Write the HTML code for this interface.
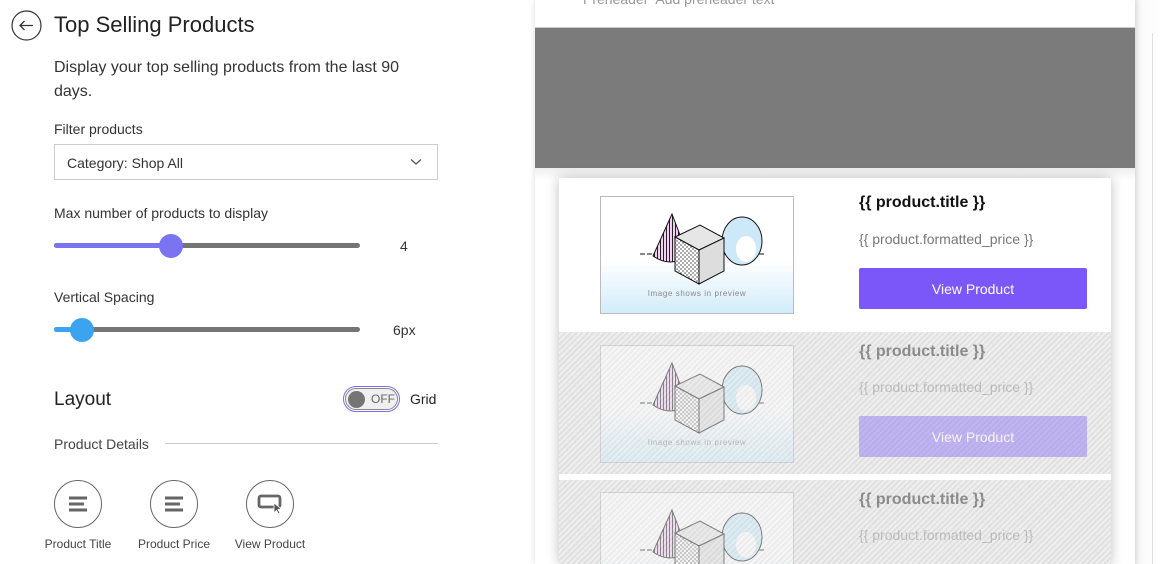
<!DOCTYPE html>
<html style="width:1162px;height:564px;overflow:hidden"><head><meta charset="utf-8"><style>
*{box-sizing:border-box;margin:0;padding:0}
body{width:1162px;height:564px;overflow:hidden;background:#fff;font-family:"Liberation Sans",sans-serif;position:relative;color:#222}
.a{position:absolute}
.lbl{font-size:14px;color:#333}
.track{position:absolute;height:5px;border-radius:3px;background:#757575}
.circ{position:absolute;width:48px;height:48px;border:1.3px solid #666;border-radius:50%;display:flex;align-items:center;justify-content:center}
.cap{position:absolute;font-size:12px;color:#444;text-align:center;width:96px}
.row{position:absolute;left:0;width:552px;overflow:hidden}
.hatch{background:repeating-linear-gradient(135deg,#e6e6e6 0 2px,#eeeeee 2px 4px)}
.img{position:absolute;left:41px;width:194px;height:118px}
.t{position:absolute;left:300px;font-size:16px;font-weight:bold;color:#111}
.p{position:absolute;left:300px;font-size:14px;color:#777}
.btn{position:absolute;left:300px;width:228px;height:41px;background:#7b57fa;color:#fff;font-size:14px;display:flex;align-items:center;justify-content:center;border-radius:2px}
.ov{position:absolute;inset:0;background:repeating-linear-gradient(135deg,rgba(210,210,210,.3) 0 2px,rgba(240,240,240,.3) 2px 4px)}
</style></head><body>
<svg width="0" height="0" style="position:absolute"><defs>
<linearGradient id="g" x1="0" y1="0" x2="0" y2="1"><stop offset="0.55" stop-color="#fff"/><stop offset="1" stop-color="#d2ecfa"/></linearGradient>
<pattern id="st" width="3" height="3" patternUnits="userSpaceOnUse"><rect width="3" height="3" fill="#f3d0f3"/><rect width="1" height="3" fill="#222"/></pattern>
<pattern id="sp" width="4" height="4" patternUnits="userSpaceOnUse"><rect width="4" height="4" fill="#fff"/><path d="M0 1h2M2 3h2" stroke="#222" stroke-width=".8"/></pattern>
<symbol id="pic" viewBox="0 0 194 118">
<rect x=".5" y=".5" width="193" height="117" fill="url(#g)" stroke="#bbb"/>
<path d="M40 58h125" stroke="#111" stroke-dasharray="5 2"/>
<ellipse cx="142" cy="45" rx="20" ry="24" fill="#cde9f9" stroke="#111"/>
<ellipse cx="146" cy="53" rx="10" ry="13" fill="#fff"/>
<path d="M72 18L53 60Q70 72 88 60Z" fill="url(#st)" stroke="#111"/>
<path d="M75 41L100 29L124 42L99 54Z" fill="#e6e6e6" stroke="#111"/>
<path d="M75 41L99 54L99 88L75 75Z" fill="url(#sp)" stroke="#111"/>
<path d="M99 54L124 42L124 75L99 88Z" fill="#ddd" stroke="#111"/>
<text x="97" y="100" font-size="8" fill="#888" text-anchor="middle" font-family="Liberation Sans" letter-spacing=".6">Image shows in preview</text>
</symbol></defs></svg>

<svg class="a" style="left:11px;top:10px" width="32" height="32"><circle cx="15.5" cy="15.5" r="14.5" fill="none" stroke="#333" stroke-width="1.2"/><path d="M9 15.5h13M13.5 11l-4.5 4.5 4.5 4.5" fill="none" stroke="#333" stroke-width="1.3"/></svg>
<div class="a" style="left:54px;top:12px;font-size:22px;color:#222">Top Selling Products</div>
<div class="a" style="left:54px;top:56px;font-size:16px;line-height:24px;color:#333;width:370px">Display your top selling products from the last 90 days.</div>
<div class="a lbl" style="left:54px;top:121px">Filter products</div>
<div class="a" style="left:54px;top:144px;width:384px;height:36px;border:1px solid #ccc"><span class="a" style="left:12px;top:10px;font-size:14px;color:#333">Category: Shop All</span><svg class="a" style="left:355px;top:13px" width="12" height="8"><path d="M1 1.5l5 4.5 5-4.5" fill="none" stroke="#555" stroke-width="1.3"/></svg></div>
<div class="a lbl" style="left:54px;top:205px">Max number of products to display</div>
<div class="track" style="left:54px;top:243px;width:306px"></div>
<div class="track" style="left:54px;top:243px;width:117px;background:#7a74f0"></div>
<div class="a" style="left:159px;top:234px;width:24px;height:24px;border-radius:50%;background:#7a74f0"></div>
<div class="a" style="left:400px;top:238px;font-size:14px;color:#333">4</div>
<div class="a lbl" style="left:54px;top:289px">Vertical Spacing</div>
<div class="track" style="left:54px;top:327px;width:306px"></div>
<div class="track" style="left:54px;top:327px;width:28px;background:#3ba3f0"></div>
<div class="a" style="left:70px;top:318px;width:24px;height:24px;border-radius:50%;background:#3ba3f0"></div>
<div class="a" style="left:393px;top:322px;font-size:14px;color:#333">6px</div>
<div class="a" style="left:54px;top:389px;font-size:19px;color:#222">Layout</div>
<div class="a" style="left:343px;top:386px;width:57px;height:26px;border-radius:13px;border:1.5px solid #7b6cf0;padding:1px"><div style="width:100%;height:100%;border-radius:11px;border:1px solid #888;background:#f0f0f0;position:relative"><div class="a" style="left:2px;top:2px;width:17px;height:17px;border-radius:50%;background:#757575"></div><span class="a" style="left:25px;top:3px;font-size:12px;color:#666">OFF</span></div></div>
<div class="a" style="left:410px;top:391px;font-size:14px;color:#222">Grid</div>
<div class="a" style="left:54px;top:436px;font-size:14px;color:#444">Product Details</div>
<div class="a" style="left:165px;top:443px;width:273px;height:1px;background:#ccc"></div>
<div class="circ" style="left:54px;top:480px"><svg width="20" height="16"><path d="M1 2h18M1 8h15M1 14h18" stroke="#666" stroke-width="3"/></svg></div>
<div class="circ" style="left:150px;top:480px"><svg width="20" height="16"><path d="M1 2h18M1 8h15M1 14h18" stroke="#666" stroke-width="3"/></svg></div>
<div class="circ" style="left:246px;top:480px"><svg width="26" height="20"><rect x="2" y="2" width="21" height="11" rx="2" fill="none" stroke="#666" stroke-width="2.8"/><path d="M17 9l0 10 2.5-2.5 2 3.5 1.5-1-2-3.5 3.5-.5z" fill="#555" stroke="#fff" stroke-width=".8"/></svg></div>
<div class="cap" style="left:30px;top:537px">Product Title</div>
<div class="cap" style="left:126px;top:537px">Product Price</div>
<div class="cap" style="left:222px;top:537px">View Product</div>

<div class="a" style="left:1135px;top:0;width:27px;height:564px;background:linear-gradient(90deg,#eee,#fafafa 6px,#fff)"></div>
<div class="a" style="left:1152px;top:33px;width:1px;height:531px;background:#e0e0e0"></div>
<div class="a" style="left:535px;top:0;width:600px;height:564px;background:#fff;box-shadow:0 0 6px rgba(0,0,0,.15)"></div>
<div class="a" style="left:583px;top:-9px;font-size:14px;color:#999">Preheader&nbsp; Add preheader text</div>
<div class="a" style="left:535px;top:27px;width:600px;height:1px;background:#ccc"></div>
<div class="a" style="left:535px;top:28px;width:600px;height:140px;background:#7b7b7b"></div>
<div class="a" style="left:535px;top:168px;width:600px;height:12px;background:linear-gradient(#eee,#fff)"></div>
<div class="a" style="left:559px;top:178px;width:552px;height:386px;background:#fff;box-shadow:0 0 12px rgba(0,0,0,.25);overflow:hidden">
<div class="row" style="top:0;height:154px;background:#fff">
<svg class="img" style="top:18px" viewBox="0 0 194 118"><use href="#pic"/></svg>
<div class="t" style="top:16px">{{ product.title }}</div>
<div class="p" style="top:53px">{{ product.formatted_price }}</div>
<div class="btn" style="top:90px">View Product</div>
</div>
<div class="row hatch" style="top:154px;height:142px">
<svg class="img" style="top:13px;opacity:.7" viewBox="0 0 194 118"><use href="#pic"/></svg>
<div class="t" style="top:11px;color:#666">{{ product.title }}</div>
<div class="p" style="top:47px;color:#aaa">{{ product.formatted_price }}</div>
<div class="btn" style="top:84px;background:#ad9bf3">View Product</div>
<div class="ov"></div>
</div>
<div class="row hatch" style="top:302px;height:84px">
<svg class="img" style="top:12px;height:72px;opacity:.7" viewBox="0 0 194 72" preserveAspectRatio="xMidYMin slice"><use href="#pic" width="194" height="118"/></svg>
<div class="t" style="top:11px;color:#666">{{ product.title }}</div>
<div class="p" style="top:47px;color:#aaa">{{ product.formatted_price }}</div>
<div class="ov"></div>
</div>
</div>
</body></html>
